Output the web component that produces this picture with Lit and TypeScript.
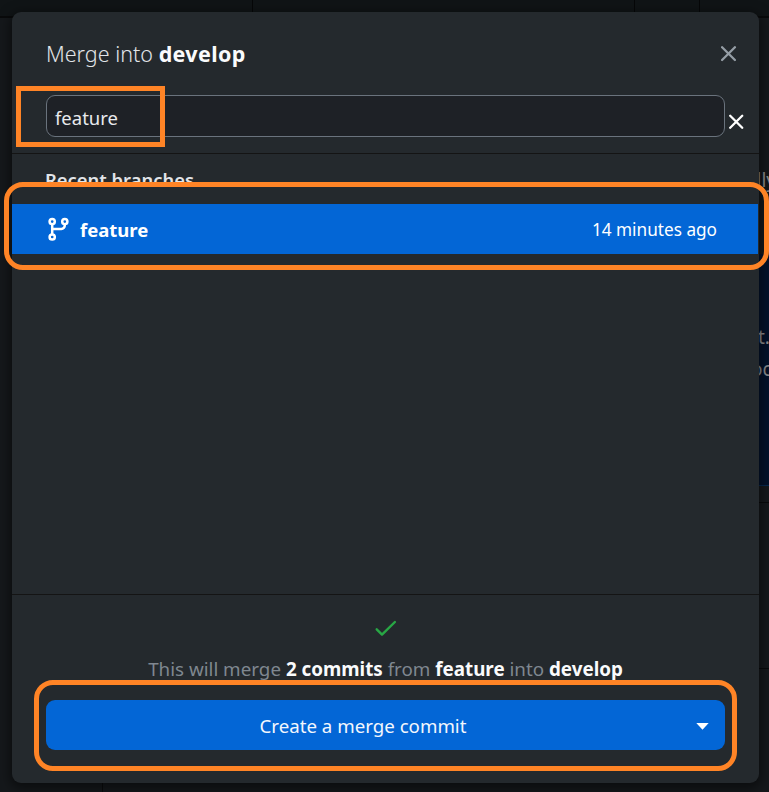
import { LitElement, html, css } from "lit";
import { customElement } from "lit/decorators.js";

@customElement("app-root")
export class AppRoot extends LitElement {
  static styles = css`
    :host {
      display: block;
      position: relative;
      width: 769px;
      height: 792px;
      overflow: hidden;
      background: #15181b;
      font-family: "Noto Sans", "Open Sans", sans-serif;
      font-size: 18px;
      color: #f6f8fa;
    }
    * { box-sizing: border-box; }
    svg { display: block; flex: none; }
    span, b { white-space: pre; }
    b { color: #fafbfc; font-weight: 700; }

    .backdrop { position: absolute; inset: 0; display: flex; flex-direction: column; }
    .toolbar { height: 18px; flex: none; display: flex; background: #101416; border-bottom: 2px solid #090a0b; }
    .toolbar i { border-right: 1px solid #060708; }
    .t1 { width: 253px; }
    .t2 { width: 382px; }
    .t3 { width: 65px; }
    .workspace { flex: 1; display: flex; justify-content: space-between; }
    .sidebar { width: 103px; border-right: 1px solid #0a0b0c; }
    .content { width: 11px; overflow: hidden; font-size: 19px; color: #8a8c8e; line-height: 32px; }
    .behind-top { height: 236px; padding-top: 146px; }
    .behind-top span { display: block; margin-left: -1.5px; }
    .behind-blue { height: 232px; padding-top: 67px; background: #03122a; border-bottom: 1px solid #06294f; }
    .behind-blue span { display: block; }
    .behind-blue span + span { margin-left: -7px; }
    .behind-gap { height: 17px; border-bottom: 1px solid #090a0b; }
    .behind-rest { height: 166px; border-bottom: 1px solid #090a0b; }

    .dialog {
      position: relative;
      margin: 12px 0 0 12px;
      width: 747px;
      height: 771px;
      border-radius: 9px;
      background: #24292d;
      box-shadow: 0 3px 12px 2px rgba(0, 0, 0, 0.5);
      overflow: hidden;
      display: flex;
      flex-direction: column;
    }
    .header { height: 142px; flex: none; border-bottom: 1px solid #141414; padding: 26px 14px 0 34px; }
    .title-row { display: flex; justify-content: space-between; height: 32px; padding-right: 8px; }
    .title { font-size: 21.5px; line-height: 32px; color: #e1e4e8; font-weight: 350; }
    .title b { letter-spacing: 0.35px; }
    .close { margin: 8px 0 0 0; }
    .filter { display: flex; margin-top: 25px; }
    .field {
      width: 679px; height: 42px; border: 1px solid #6a737d; border-radius: 9px;
      background: #1e2126; padding: 0 8px; line-height: 44px; font-size: 18.5px; color: #e8eaed;
    }
    .clear { margin: 19px 0 0 4px; }

    .list { flex: 1; }
    .group { height: 50px; padding-left: 33px; font-size: 18.4px; line-height: 51px; font-weight: 600; color: #e1e4e8; }
    .branch { height: 50px; width: 746px; background: #0366d6; display: flex; align-items: center; padding: 0 41px 0 36px; color: #fff; }
    .branch b { margin-left: 11px; font-size: 18.5px; color: #fff; }
    .when { margin-left: auto; font-size: 17.2px; }

    .footer { height: 189px; flex: none; border-top: 1px solid #141414; display: flex; flex-direction: column; align-items: center; }
    .check { margin: 25px 0 0 0; }
    .summary { height: 28px; line-height: 28px; margin-top: 18px; color: #7f8790; font-size: 18.8px; }
    .action { width: 679px; height: 50px; margin-top: 17px; display: flex; border-radius: 9px; background: #0366d6; overflow: hidden; align-items: center; color: #f3f7fd; }
    .create { flex: 1; text-align: center; font-size: 18.7px; line-height: 48px; padding-top: 2px; }
    .drop { width: 45px; height: 50px; display: flex; align-items: center; justify-content: center; padding-top: 2px; }

    .mark { position: absolute; border: 5px solid #ff8426; }
    .mark-filter { left: 16px; top: 86px; width: 149px; height: 61px; }
    .mark-branch { left: 4px; top: 182px; width: 765px; height: 88px; border-radius: 19px; }
    .mark-action { left: 34px; top: 680px; width: 703px; height: 91px; border-radius: 19px; }
  `;

  render() {
    return html`
      <div class="backdrop">
        <div class="toolbar"><i class="t1"></i><i class="t2"></i><i class="t3"></i></div>
        <div class="workspace">
          <div class="sidebar"></div>
          <div class="content">
            <div class="behind-top"><span>lly</span></div>
            <div class="behind-blue"><span>t.</span><span>oc</span></div>
            <div class="behind-gap"></div>
            <div class="behind-rest"></div>
          </div>
        </div>
      </div>

      <div class="dialog">
        <div class="header">
          <div class="title-row">
            <span class="title">Merge into <b>develop</b></span>
            <svg class="close" width="16" height="16" viewBox="0 0 16 16" fill="none" stroke="#959da5" stroke-width="2.3" stroke-linecap="round"><path d="M1.1 1.2l12.8 12.8M13.9 1.2L1.1 14" /></svg>
          </div>
          <div class="filter">
            <div class="field"><span class="query">feature</span></div>
            <svg class="clear" width="15" height="15" viewBox="0 0 15 15" fill="none" stroke="#fff" stroke-width="2.3" stroke-linecap="round"><path d="M1.2 1.8l12 12M13.2 1.8l-12 12" /></svg>
          </div>
        </div>

        <div class="list">
          <div class="group"><span>Recent branches</span></div>
          <div class="branch">
            <svg width="21" height="24" viewBox="0 0 21 24" fill="none" stroke="#fff" stroke-width="2.5">
              <circle cx="4.2" cy="4.6" r="2.6" />
              <circle cx="16.8" cy="4.6" r="2.6" />
              <circle cx="4.2" cy="20" r="2.6" />
              <path d="M4.2 7.2v10.1M16.8 7.2v1.3a3.4 3.4 0 0 1-3.4 3.4H4.2" />
            </svg>
            <b>feature</b>
            <span class="when">14 minutes ago</span>
          </div>
        </div>

        <div class="footer">
          <svg class="check" width="22" height="17" viewBox="0 0 22 17" fill="none" stroke="#28a745" stroke-width="2.4" stroke-linecap="round" stroke-linejoin="round"><path d="M1.7 9.3l5.3 5.3L19.9 2" /></svg>
          <span class="summary">This will merge <b>2 commits</b> from <b>feature</b> into <b>develop</b></span>
          <div class="action">
            <span class="create">Create a merge commit</span>
            <div class="drop"><svg width="13" height="7" viewBox="0 0 13 7"><path d="M0.3 0h12.4L6.5 6.7z" fill="#fff" /></svg></div>
          </div>
        </div>
      </div>

      <div class="mark mark-filter"></div>
      <div class="mark mark-branch"></div>
      <div class="mark mark-action"></div>
    `;
  }
}
